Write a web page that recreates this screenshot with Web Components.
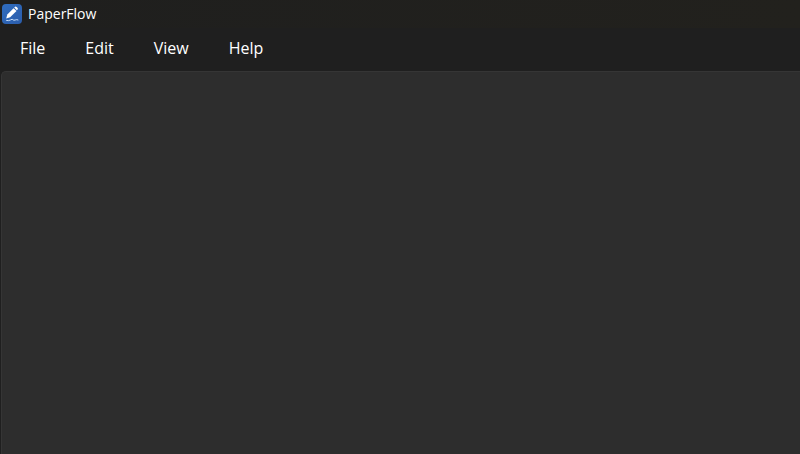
<!DOCTYPE html>
<html lang="en">
<head>
<meta charset="utf-8">
<meta name="viewport" content="width=device-width, initial-scale=1">
<title>PaperFlow</title>
<style>
html, body {
	height: 100%;
	margin: 0;
	background: #1f1f1f;
}
</style>
</head>
<body>
<paper-window>
	<title-bar slot="title">PaperFlow</title-bar>
	<menu-bar slot="menu">
		<menu-item>File</menu-item>
		<menu-item>Edit</menu-item>
		<menu-item>View</menu-item>
		<menu-item>Help</menu-item>
	</menu-bar>
	<text-editor></text-editor>
</paper-window>
<script>
class BaseElement extends HTMLElement{
	constructor () {
		super();
		let shadowRoot = this.attachShadow({mode: 'open'});
		shadowRoot.innerHTML = this.constructor.template;
	}
}

class PaperWindow extends BaseElement{}
PaperWindow.template=`
<style>
:host {
	display: flex;
	flex-direction: column;
	height: 100%;
	overflow: hidden;
	background: #1f1f1f;
	color: #fff;
	font-family: "Segoe UI", "Open Sans", "Noto Sans", sans-serif;
}
main {
	display: flex;
	flex: 1;
	min-height: 0;
}
</style>
<slot name="title"></slot>
<slot name="menu"></slot>
<main><slot></slot></main>
`;

class TitleBar extends BaseElement{}
TitleBar.template=`
<style>
:host {
	display: block;
	background: linear-gradient(90deg, #1f1f1e, #22211d);
}
header {
	display: flex;
	align-items: center;
	gap: 6px;
	height: 28px;
	padding-left: 2px;
}
svg {
	flex: none;
}
h1 {
	margin: 0;
	font-size: 14px;
	font-weight: 400;
	line-height: 20px;
}
</style>
<header>
	<svg width="20" height="20" viewBox="0 0 20 20" aria-hidden="true">
		<defs>
			<linearGradient id="tile" x1="0" y1="0" x2="1" y2="1">
				<stop offset="0" stop-color="#2f6cbe"/>
				<stop offset="1" stop-color="#2b5dab"/>
			</linearGradient>
		</defs>
		<rect width="20" height="20" rx="4" fill="url(#tile)"/>
		<path d="M4.2 14.6 5.3 10.6 11.6 4.2 14.5 7 8.1 13.3Z" fill="#fff"/>
		<path d="M12.2 3.6 13.1 2.8Q13.8 2.3 14.6 3L15.6 4Q16.2 4.8 15.6 5.5L14.9 6.3Z" fill="#fff"/>
		<path d="M4.6 16.5Q6.8 17.1 8.6 15.9T11 15.7T13.2 16T16 15.9" fill="none" stroke="#c5dcf8" stroke-width="1" stroke-linecap="round"/>
	</svg>
	<h1><slot></slot></h1>
</header>
`;

class MenuBar extends BaseElement{}
MenuBar.template=`
<style>
:host {
	display: block;
}
nav {
	display: flex;
	align-items: center;
	height: 39px;
	padding-bottom: 4px;
}
</style>
<nav aria-label="Main menu"><slot></slot></nav>
`;

class MenuItem extends BaseElement{}
MenuItem.template=`
<style>
:host {
	display: block;
}
button {
	display: block;
	margin: 0;
	padding: 6px 20px;
	border: 0;
	border-radius: 4px;
	background: none;
	color: inherit;
	font: inherit;
	font-size: 16px;
	line-height: 20px;
}
button:hover {
	background: #2d2d2d;
}
</style>
<button type="button"><slot></slot></button>
`;

class TextEditor extends BaseElement{}
TextEditor.template=`
<style>
:host {
	display: flex;
	flex: 1;
	padding-left: 1px;
}
textarea {
	flex: 1;
	box-sizing: border-box;
	min-width: 0;
	margin: 0;
	padding: 8px;
	border: 1px solid #353535;
	border-width: 1px 0 0 1px;
	border-radius: 5px 0 0 0;
	outline: none;
	resize: none;
	background: #2d2d2d;
	color: inherit;
	font: inherit;
	font-size: 16px;
}
</style>
<textarea aria-label="Document" spellcheck="false"></textarea>
`;

customElements.define('paper-window',PaperWindow);
customElements.define('title-bar',TitleBar);
customElements.define('menu-bar',MenuBar);
customElements.define('menu-item',MenuItem);
customElements.define('text-editor',TextEditor);
</script>
</body>
</html>
